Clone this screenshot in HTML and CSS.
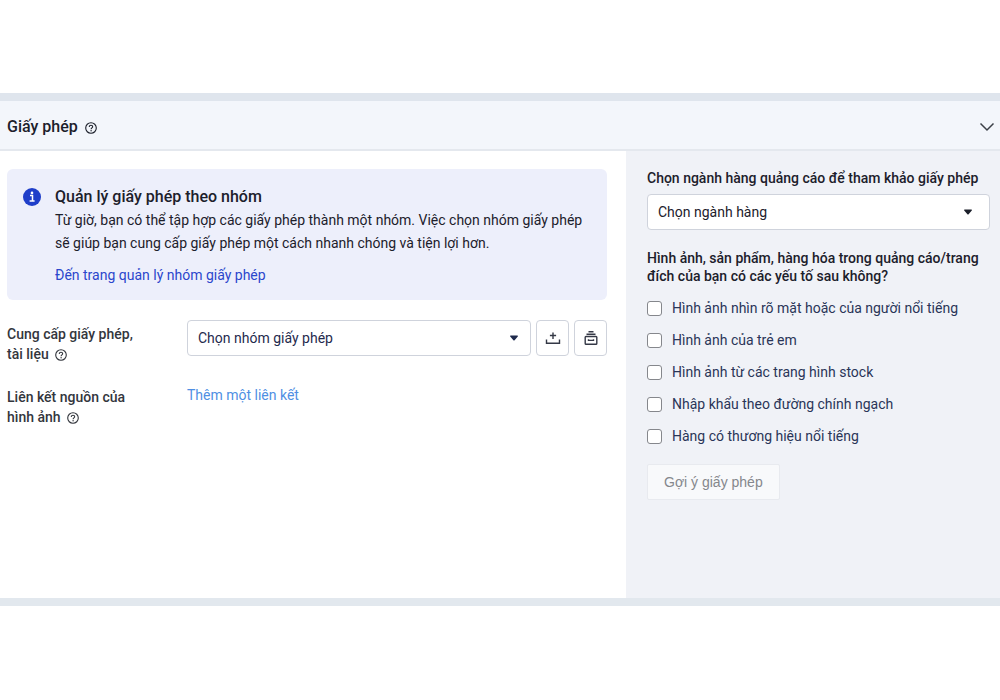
FILE: index.html
```html
<!DOCTYPE html>
<html lang="vi">
<head>
<meta charset="utf-8">
<meta name="viewport" content="width=device-width, initial-scale=1">
<title>Giấy phép</title>
<link rel="stylesheet" href="styles.css">
</head>
<body>
<svg class="symbols" aria-hidden="true">
  <symbol id="help" viewBox="0 0 12 12">
    <circle cx="6" cy="6" r="5.3" fill="none" stroke="currentColor" stroke-width="1.1"/>
    <path d="M4.3 4.9C4.3 3.8 5 3.2 6 3.2s1.7.6 1.7 1.5c0 1.2-1.6 1.2-1.6 2.5" fill="none" stroke="currentColor" stroke-width="1.1"/>
    <circle cx="6.1" cy="8.8" r=".7" fill="currentColor"/>
  </symbol>
  <symbol id="caret" viewBox="0 0 8 6">
    <path d="M.6.5h6.8c.5 0 .7.5.4.9L4.6 5.2c-.3.4-.9.4-1.2 0L.2 1.4C-.1 1 .1.5.6.5z" fill="currentColor"/>
  </symbol>
</svg>
<main class="panel">
  <header class="panel-header">
    <h1 class="panel-title">Giấy phép <svg class="help"><use href="#help"/></svg></h1>
    <button class="collapse" type="button" aria-label="Thu gọn">
      <svg width="16" height="10" viewBox="0 0 16 10"><path d="M1.5 1.5 8 8l6.500-6.500" fill="none" stroke="currentColor" stroke-width="1.500"/></svg>
    </button>
  </header>
  <div class="columns">
    <section class="content">
      <aside class="notice">
        <svg class="notice-icon" viewBox="0 0 18 18"><circle cx="9" cy="9" r="9" fill="#1f3ec9"/><circle cx="9" cy="4.900" r="1.300" fill="#fff"/><path d="M7 7.600h2.500v5M6.600 13h5" fill="none" stroke="#fff" stroke-width="1.500"/></svg>
        <div class="notice-body">
          <h2 class="notice-title">Quản lý giấy phép theo nhóm</h2>
          <p class="notice-text">Từ giờ, bạn có thể tập hợp các giấy phép thành một nhóm. Việc chọn nhóm giấy phép sẽ giúp bạn cung cấp giấy phép một cách nhanh chóng và tiện lợi hơn.</p>
          <a class="notice-link" href="#">Đến trang quản lý nhóm giấy phép</a>
        </div>
      </aside>
      <div class="field">
        <label class="field-label" for="group">Cung cấp giấy phép, tài liệu <svg class="help"><use href="#help"/></svg></label>
        <div class="field-controls">
          <div class="select-box">
            <select class="select" id="group"><option>Chọn nhóm giấy phép</option></select>
            <svg class="caret"><use href="#caret"/></svg>
          </div>
          <button class="icon-button" type="button" aria-label="Tải lên">
            <svg width="16" height="14" viewBox="0 0 16 14" fill="none" stroke="currentColor" stroke-width="1.400"><path d="M1.500 8.500v3.800h13V8.500M8 1.500v6.500M4.900 4.500h6.200"/></svg>
          </button>
          <button class="icon-button" type="button" aria-label="Thư viện giấy phép">
            <svg width="14" height="16" viewBox="0 0 14 16" fill="none" stroke="currentColor" stroke-width="1.400"><path d="M4.500 1.700h5M2.500 4.200h9"/><rect x="1.200" y="6.500" width="11.600" height="7.800" rx=".8"/><path d="M4.500 9.200v1.200h5V9.200"/></svg>
          </button>
        </div>
      </div>
      <div class="field">
        <div class="field-label">Liên kết nguồn của hình ảnh <svg class="help"><use href="#help"/></svg></div>
        <a class="add-link" href="#">Thêm một liên kết</a>
      </div>
    </section>
    <form class="sidebar">
      <label class="side-label" for="industry">Chọn ngành hàng quảng cáo để tham khảo giấy phép</label>
      <div class="select-box side-select">
        <select class="select" id="industry"><option>Chọn ngành hàng</option></select>
        <svg class="caret"><use href="#caret"/></svg>
      </div>
      <fieldset class="questions">
        <legend class="side-label">Hình ảnh, sản phẩm, hàng hóa trong quảng cáo/trang đích của bạn có các yếu tố sau không?</legend>
        <div class="options">
          <label class="option"><input class="check" type="checkbox">Hình ảnh nhìn rõ mặt hoặc của người nổi tiếng</label>
          <label class="option"><input class="check" type="checkbox">Hình ảnh của trẻ em</label>
          <label class="option"><input class="check" type="checkbox">Hình ảnh từ các trang hình stock</label>
          <label class="option"><input class="check" type="checkbox">Nhập khẩu theo đường chính ngạch</label>
          <label class="option"><input class="check" type="checkbox">Hàng có thương hiệu nổi tiếng</label>
        </div>
      </fieldset>
      <button class="suggest" type="button" disabled>Gợi ý giấy phép</button>
    </form>
  </div>
</main>
</body>
</html>
```
FILE: styles.css
```css
* {
  box-sizing: border-box;
}

body {
  margin: 0;
  padding: 93px 0;
  background: #fff;
  color: #1c202b;
  font-family: Roboto, "Liberation Sans", sans-serif;
  font-size: 14px;
  line-height: 20px;
}

h1,
h2,
p {
  margin: 0;
}

a {
  text-decoration: none;
}

button,
select {
  font: inherit;
}

.symbols {
  display: none;
}

.panel {
  border-top: 8px solid #dfe5ed;
  border-bottom: 8px solid #e2e8ee;
}

.panel-header {
  display: flex;
  align-items: center;
  justify-content: space-between;
  height: 50px;
  padding: 4px 5px 0 7px;
  border-bottom: 2px solid #e4e8ee;
  background: #f3f6fb;
}

.panel-title {
  font-size: 16px;
  font-weight: 500;
  line-height: 24px;
}

.help {
  width: 12px;
  height: 12px;
  margin-left: 3px;
  vertical-align: -2px;
}

.collapse {
  display: flex;
  padding: 0;
  border: 0;
  background: none;
  color: #3c4048;
}

.columns {
  display: grid;
  grid-template-columns: minmax(0, 1fr) 374px;
  min-height: 447px;
}

.content {
  padding: 18px 19px 20px 7px;
}

.notice {
  display: flex;
  gap: 14px;
  margin-bottom: 20px;
  padding: 16px 24px 13px 16px;
  border-radius: 6px;
  background: #edeffb;
}

.notice-icon {
  flex: none;
  width: 18px;
  height: 18px;
  margin-top: 3px;
}

.notice-title {
  font-size: 16px;
  font-weight: 500;
  line-height: 24px;
}

.notice-text {
  margin-bottom: 8px;
  line-height: 23px;
}

.notice-link {
  display: block;
  color: #2b46cc;
  line-height: 24px;
}

.field {
  display: grid;
  grid-template-columns: 140px minmax(0, 1fr);
  column-gap: 40px;
  margin-bottom: 19px;
}

.field-label {
  padding-top: 4px;
  color: #33363d;
  font-weight: 500;
}

.field-controls {
  display: flex;
  gap: 5px;
}

.select-box {
  display: grid;
  flex: 1;
  align-items: center;
  height: 36px;
  color: #1f2a4d;
}

.select {
  grid-area: 1 / 1;
  width: 100%;
  height: 36px;
  padding: 0 30px 0 10px;
  border: 1px solid #cfd3dc;
  border-radius: 4px;
  background: #fff;
  color: inherit;
  appearance: none;
}

.caret {
  grid-area: 1 / 1;
  justify-self: end;
  width: 8px;
  height: 6px;
  margin-right: 13px;
  pointer-events: none;
}

.icon-button {
  display: flex;
  align-items: center;
  justify-content: center;
  width: 33px;
  height: 36px;
  padding: 0;
  border: 1px solid #cfd3dc;
  border-radius: 4px;
  background: #fff;
  color: #343846;
}

.add-link {
  padding-top: 2px;
  color: #4f8fe3;
}

.sidebar {
  padding: 18px 10px 20px 21px;
  background: #f0f2f7;
}

.side-label {
  display: block;
  padding: 0;
  font-weight: 500;
  line-height: 18px;
}

.side-select {
  margin: 7px 0 19px;
  color: #1c202b;
}

.side-select .caret {
  margin-right: 18px;
}

.questions {
  margin: 0 0 12px;
  padding: 0;
  border: 0;
}

.options {
  padding-top: 7px;
}

.option {
  display: flex;
  align-items: center;
  gap: 10px;
  height: 32px;
  color: #2a3558;
}

.check {
  width: 15px;
  height: 15px;
  margin: 0;
  border: 1px solid #85878c;
  border-radius: 3px;
  background: #fff;
  appearance: none;
}

.check:checked {
  background: #2b46cc;
}

.suggest {
  height: 36px;
  padding: 0 16px;
  border: 1px solid #e8eaef;
  border-radius: 2px;
  background: #f8f9fb;
  color: #85878c;
  font-family: "Liberation Sans", Arial, sans-serif;
}
```
